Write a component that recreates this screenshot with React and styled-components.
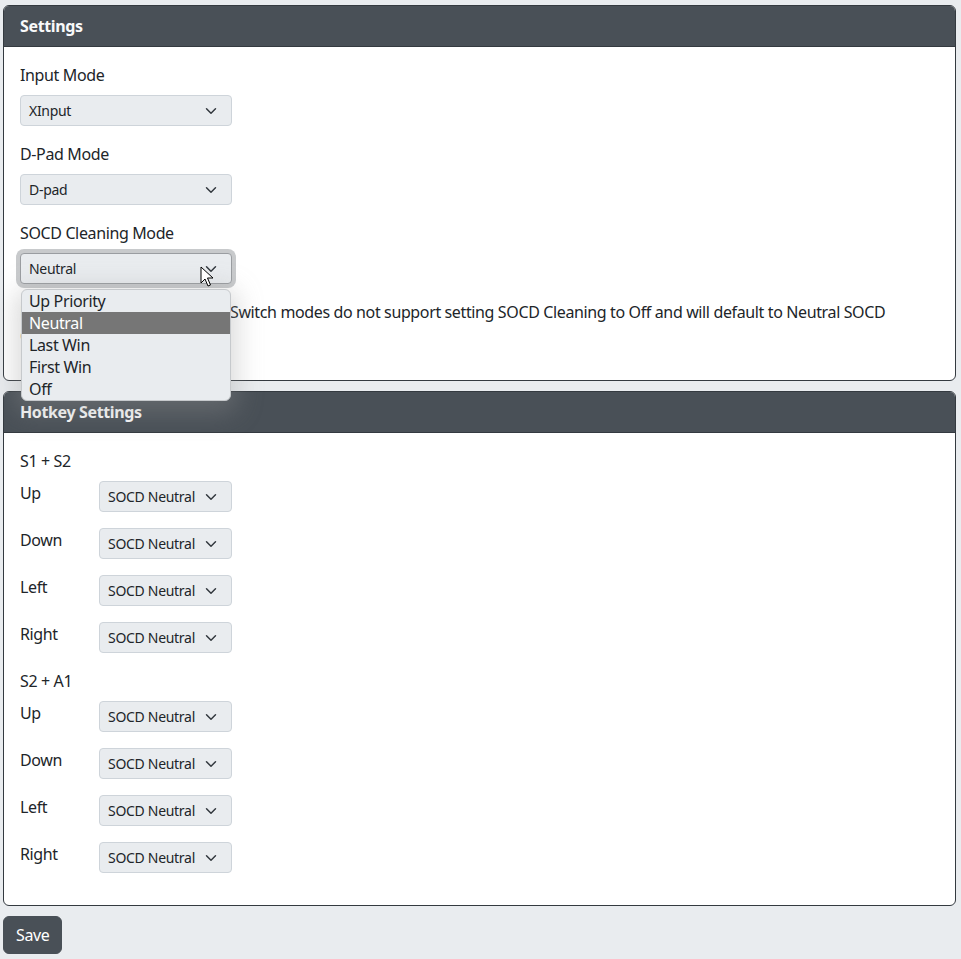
import React from "react";
import styled, { createGlobalStyle } from "styled-components";

const GlobalStyle = createGlobalStyle`
  html, body {
    margin: 0;
    background: #e9ecef;
    font-family: "Noto Sans", "Segoe UI", sans-serif;
    color: #212529;
    font-size: 16px;
    line-height: 24px;
    letter-spacing: -0.37px;
  }
  * { box-sizing: border-box; }
`;

const chevron =
  "url(\"data:image/svg+xml,%3csvg xmlns='http://www.w3.org/2000/svg' viewBox='0 0 16 16'%3e%3cpath fill='none' stroke='%23343a40' stroke-linecap='round' stroke-linejoin='round' stroke-width='2' d='m2 5 6 6 6-6'/%3e%3c/svg%3e\")";

const Page = styled.div`
  padding: 5px 5px 5px 3px;
`;

const Card = styled.section`
  background: #fff;
  border: 1px solid #343a40;
  border-radius: 6px;
  margin-bottom: 10px;
`;

const CardHeader = styled.header`
  background: #495057;
  color: #f8f9fa;
  font-weight: 700;
  padding: 8px 16px;
  border-bottom: 1px solid #343a40;
  border-radius: 5px 5px 0 0;
`;

const CardBody = styled.div`
  padding: 16px;
`;

const Group = styled.div`
  margin-bottom: 16px;
`;

const Label = styled.div`
  margin-bottom: 8px;
`;

const SelectWrap = styled.div`
  position: relative;
`;

const Select = styled.div`
  position: relative;
  width: ${(p) => p.$width || 212}px;
  height: 31px;
  padding: 3px 32px 3px 8px;
  font-size: 14px;
  line-height: 23px;
  letter-spacing: -0.3px;
  background: #e9ecef ${chevron} no-repeat right 12px center / 16px 12px;
  border: 1px solid ${(p) => (p.$focused ? "#9a9da1" : "#ced4da")};
  border-radius: 4px;
  box-shadow: ${(p) => (p.$focused ? "0 0 0 4px rgba(134,138,142,0.45)" : "none")};
  white-space: nowrap;
`;

const Hint = styled.div`
  margin-top: 16px;
`;

const Popup = styled.ul`
  position: absolute;
  left: 1px;
  top: 36px;
  width: 210px;
  margin: 0;
  padding: 0;
  list-style: none;
  background: #e9ecef;
  border: 1px solid #c6c9cc;
  border-radius: 6px;
  overflow: hidden;
  box-shadow: 0 6px 26px 6px rgba(150, 150, 150, 0.35);
  z-index: 10;
`;

const Option = styled.li`
  height: 22px;
  line-height: 22px;
  padding-left: 7px;
  background: ${(p) => (p.$active ? "#767676" : "transparent")};
  color: ${(p) => (p.$active ? "#fff" : "#212529")};
`;

const Cursor = styled.svg`
  position: absolute;
  left: 180px;
  top: 13px;
  z-index: 11;
`;

const GroupTitle = styled.div`
  margin-bottom: 8px;
`;

const Row = styled.div`
  display: flex;
  align-items: flex-start;
  margin-bottom: 16px;
`;

const RowLabel = styled.div`
  width: 79px;
`;

const SaveButton = styled.button`
  font: inherit;
  letter-spacing: inherit;
  color: #fff;
  background: #495057;
  border: 1px solid #495057;
  border-radius: 6px;
  padding: 6px 12px;
  line-height: 24px;
`;

const options = ["Up Priority", "Neutral", "Last Win", "First Win", "Off"];
const hotkeyGroups = ["S1 + S2", "S2 + A1"];
const directions = ["Up", "Down", "Left", "Right"];

export default function App() {
  return (
    <Page>
      <GlobalStyle />
      <Card>
        <CardHeader>Settings</CardHeader>
        <CardBody>
          <Group>
            <Label>Input Mode</Label>
            <Select>XInput</Select>
          </Group>
          <Group>
            <Label>D-Pad Mode</Label>
            <Select>D-pad</Select>
          </Group>
          <Group>
            <Label>SOCD Cleaning Mode</Label>
            <SelectWrap>
              <Select $focused>Neutral</Select>
              <Cursor width="14" height="22" viewBox="0 0 14 22">
                <path d="M1 1 L1 17 L5 13 L8 20 L10.5 19 L7.5 12 L13 12 Z" fill="#fff" stroke="#000" strokeWidth="1" strokeLinejoin="round" />
              </Cursor>
              <Popup>
                {options.map((o) => (
                  <Option key={o} $active={o === "Neutral"}>{o}</Option>
                ))}
              </Popup>
            </SelectWrap>
            <Hint>
              Note: PS4, PS3 and Nintendo Switch modes do not support setting SOCD Cleaning to Off and will default to Neutral SOCD Cleaning mode.
            </Hint>
          </Group>
        </CardBody>
      </Card>
      <Card>
        <CardHeader>Hotkey Settings</CardHeader>
        <CardBody>
          {hotkeyGroups.map((g) => (
            <div key={g}>
              <GroupTitle>{g}</GroupTitle>
              {directions.map((d) => (
                <Row key={d}>
                  <RowLabel>{d}</RowLabel>
                  <Select $width={133}>SOCD Neutral</Select>
                </Row>
              ))}
            </div>
          ))}
        </CardBody>
      </Card>
      <SaveButton>Save</SaveButton>
    </Page>
  );
}
